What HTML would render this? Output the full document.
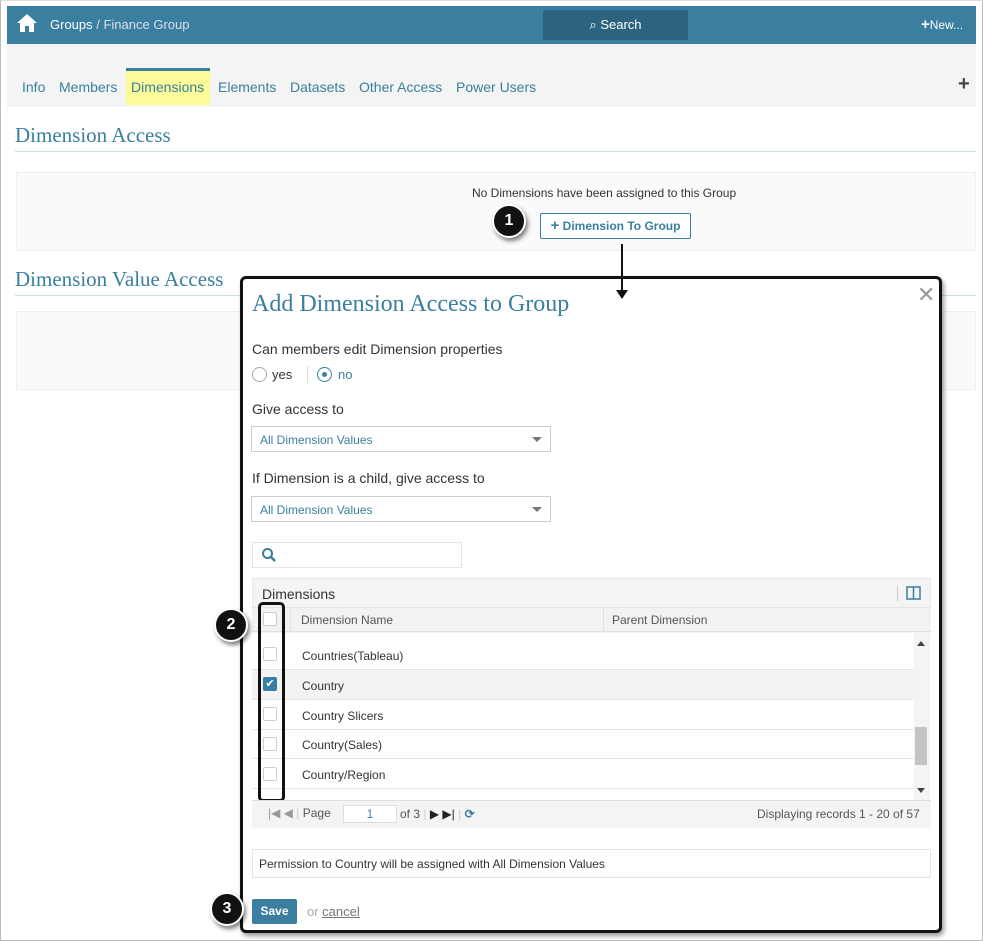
<!DOCTYPE html>
<html><head><style>
*{margin:0;padding:0;box-sizing:border-box}
body{width:983px;height:941px;background:#fff;font-family:"Liberation Sans",sans-serif;position:relative;overflow:hidden;font-size:13px;color:#333}
.a{position:absolute}
.serif{font-family:"Liberation Serif",serif;color:#3a7f9f}
.tab{position:absolute;top:79px;font-size:14px;color:#3a7f9f}
.cb{position:absolute;left:263px;width:14px;height:14px;border:1px solid #ccc;background:#fff;border-radius:2px}
.row{position:absolute;left:252px;width:662px;height:30px;border-bottom:1px solid #e4e4e4;font-size:12px;color:#333}
.row span{position:absolute;left:50px;top:9px}
.badge{position:absolute;width:34px;height:34px;border-radius:50%;background:#111;color:#fff;font-weight:bold;font-size:16px;text-align:center;line-height:30px;box-shadow:2px 3px 4px rgba(0,0,0,.5);border:2px solid #fff}
.sel{position:absolute;left:251px;width:300px;height:26px;border:1px solid #ccc;background:#fff;font-size:12px;color:#3a7f9f;padding:6px 8px}
.sel:after{content:"";position:absolute;right:8px;top:10px;border:5px solid transparent;border-top-color:#777}
</style></head><body>
<div class="a" style="left:0;top:0;width:983px;height:941px;border:1px solid #bbb;border-top-color:#ddd"></div>
<div class="a" style="left:7px;top:6px;width:969px;height:38px;background:#3a7f9f"></div>
<svg class="a" style="left:16px;top:13px" width="22" height="20" viewBox="0 0 22 20"><path d="M11 1 L1 10 H4 V19 H9 V13 H13 V19 H18 V10 H21 Z" fill="#fff"/></svg>
<div class="a" style="left:50px;top:17px;color:#fff;font-size:13px">Groups <span style="color:#dde">/ Finance Group</span></div>
<div class="a" style="left:543px;top:10px;width:145px;height:30px;background:#2c6480;border-radius:2px;color:#fff;font-size:13px;text-align:center;line-height:30px">&#x2315; Search</div>
<div class="a" style="left:921px;top:16px;color:#fff;font-size:12px"><b style="font-size:15px">+</b>New...</div>
<div class="a" style="left:7px;top:44px;width:969px;height:63px;background:#f4f4f4"></div>
<div class="a" style="left:126px;top:68px;width:84px;height:37px;background:#fbfb99;border-top:3px solid #3a7f9f"></div>
<div class="tab" style="left:22px">Info</div>
<div class="tab" style="left:59px">Members</div>
<div class="tab" style="left:131px;color:#3a7f9f">Dimensions</div>
<div class="tab" style="left:218px">Elements</div>
<div class="tab" style="left:290px">Datasets</div>
<div class="tab" style="left:359px">Other Access</div>
<div class="tab" style="left:456px">Power Users</div>
<div class="a" style="left:958px;top:73px;font-size:20px;font-weight:bold;color:#444">+</div>
<div class="a serif" style="left:15px;top:123px;font-size:21px">Dimension Access</div>
<div class="a" style="left:15px;top:151px;width:961px;height:1px;background:#cdd"></div>
<div class="a" style="left:16px;top:172px;width:960px;height:79px;background:#fafafa;border:1px solid #eee"></div>
<div class="a" style="left:472px;top:186px;font-size:12px;color:#333">No Dimensions have been assigned to this Group</div>
<div class="a" style="left:540px;top:213px;width:151px;height:26px;border:1px solid #3a7f9f;background:#fff;border-radius:2px;color:#3a7f9f;font-size:12px;font-weight:bold;line-height:24px;text-align:center"><span style="font-size:15px">+</span> Dimension To Group</div>
<div class="badge" style="left:492px;top:204px">1</div>
<div class="a serif" style="left:15px;top:267px;font-size:21px">Dimension Value Access</div>
<div class="a" style="left:15px;top:295px;width:961px;height:1px;background:#cdd"></div>
<div class="a" style="left:16px;top:311px;width:960px;height:79px;background:#fafafa;border:1px solid #eee"></div>
<div class="a" style="left:240px;top:276px;width:702px;height:657px;background:#fff;border:3px solid #111;border-radius:6px;box-shadow:2px 3px 5px rgba(0,0,0,.4)"></div>
<div class="a" style="left:621px;top:244px;width:2px;height:48px;background:#111"></div>
<div class="a" style="left:616px;top:290px;border:6px solid transparent;border-top:9px solid #111"></div>
<div class="a serif" style="left:252px;top:291px;font-size:24px">Add Dimension Access to Group</div>
<div class="a" style="left:917px;top:282px;font-size:22px;color:#999">✕</div>
<div class="a" style="left:252px;top:341px;font-size:14px">Can members edit Dimension properties</div>
<div class="a" style="left:252px;top:367px;width:15px;height:15px;border:1px solid #aaa;border-radius:50%"></div>
<div class="a" style="left:272px;top:367px;font-size:13px">yes</div>
<div class="a" style="left:307px;top:366px;width:1px;height:17px;background:#ddd"></div>
<div class="a" style="left:317px;top:367px;width:15px;height:15px;border:1px solid #3a7f9f;border-radius:50%"><div style="margin:4px;width:5px;height:5px;border-radius:50%;background:#3a7f9f"></div></div>
<div class="a" style="left:338px;top:367px;font-size:13px;color:#3a7f9f">no</div>
<div class="a" style="left:252px;top:401px;font-size:14px">Give access to</div>
<div class="sel" style="top:426px">All Dimension Values</div>
<div class="a" style="left:252px;top:470px;font-size:14px">If Dimension is a child, give access to</div>
<div class="sel" style="top:496px">All Dimension Values</div>
<div class="a" style="left:252px;top:542px;width:210px;height:26px;border:1px solid #e4e4e4"></div>
<svg class="a" style="left:261px;top:547px" width="16" height="16"><circle cx="6.5" cy="6.5" r="4.5" stroke="#3a7f9f" stroke-width="2" fill="none"/><path d="M10 10 L14 14" stroke="#3a7f9f" stroke-width="2.5"/></svg>
<div class="a" style="left:252px;top:578px;width:679px;height:250px;background:#f4f4f4;border:1px solid #e8e8e8"></div>
<div class="a" style="left:262px;top:586px;font-size:14px">Dimensions</div>
<div class="a" style="left:897px;top:585px;width:1px;height:16px;background:#ccc"></div>
<svg class="a" style="left:906px;top:586px" width="15" height="14"><rect x="1" y="1" width="13" height="12" fill="none" stroke="#3a7f9f" stroke-width="1.5"/><path d="M7.5 1V13" stroke="#3a7f9f" stroke-width="1.5"/></svg>
<div class="a" style="left:252px;top:607px;width:679px;height:25px;background:#f2f2f2;border-top:1px solid #e4e4e4;border-bottom:1px solid #e0e0e0"></div>
<div class="a" style="left:290px;top:608px;width:1px;height:24px;background:#e0e0e0"></div>
<div class="a" style="left:603px;top:608px;width:1px;height:24px;background:#e0e0e0"></div>
<div class="a" style="left:301px;top:613px;font-size:12px;color:#555">Dimension Name</div>
<div class="a" style="left:612px;top:613px;font-size:12px;color:#555">Parent Dimension</div>
<div class="a" style="left:252px;top:633px;width:679px;height:167px;background:#fff;overflow:hidden"></div>
<div class="row" style="top:640px"><span>Countries(Tableau)</span></div>
<div class="row" style="top:670px;background:#f3f3f3"><span>Country</span></div>
<div class="row" style="top:700px"><span>Country Slicers</span></div>
<div class="row" style="top:729px"><span>Country(Sales)</span></div>
<div class="row" style="top:759px"><span>Country/Region</span></div>
<div class="a" style="left:914px;top:633px;width:16px;height:167px;background:#f4f4f4"></div>
<div class="a" style="left:915px;top:727px;width:12px;height:38px;background:#c4c4c4"></div>
<div class="a" style="left:917px;top:637px;border:4px solid transparent;border-bottom:5px solid #444"></div>
<div class="a" style="left:917px;top:788px;border:4px solid transparent;border-top:5px solid #444"></div>
<div class="cb" style="top:612px"></div>
<div class="cb" style="top:647px"></div>
<div class="cb" style="top:677px;background:#3a7f9f;border-color:#3a7f9f;color:#fff;font-size:11px;line-height:12px;text-align:center">✔</div>
<div class="cb" style="top:707px"></div>
<div class="cb" style="top:737px"></div>
<div class="cb" style="top:767px"></div>
<div class="a" style="left:258px;top:602px;width:27px;height:200px;border:3px solid #111;border-radius:5px"></div>
<div class="badge" style="left:214px;top:608px">2</div>
<div class="a" style="left:252px;top:800px;width:679px;height:28px;background:#f4f4f4;border-top:1px solid #e0e0e0"></div>
<div class="a" style="left:268px;top:806px;font-size:12px;color:#999">|◀ ◀ <span style="color:#ccc">|</span> <span style="color:#555">Page</span></div>
<div class="a" style="left:343px;top:805px;width:54px;height:18px;border:1px solid #ddd;background:#fff;font-size:12px;color:#3a7f9f;text-align:center;line-height:16px">1</div>
<div class="a" style="left:400px;top:807px;font-size:12px;color:#555">of 3 <span style="color:#ccc">|</span> <span style="color:#222">▶ ▶|</span> <span style="color:#ccc">|</span> <span style="color:#3a7f9f;font-weight:bold">⟳</span></div>
<div class="a" style="left:757px;top:807px;font-size:12px;color:#555">Displaying records 1 - 20 of 57</div>
<div class="a" style="left:252px;top:849px;width:679px;height:29px;border:1px solid #e4e4e4;font-size:12px;padding:7px 6px">Permission to Country will be assigned with All Dimension Values</div>
<div class="a" style="left:252px;top:899px;width:45px;height:25px;background:#3a7f9f;border-radius:2px;color:#fff;font-weight:bold;font-size:12px;text-align:center;line-height:25px">Save</div>
<div class="a" style="left:307px;top:904px;font-size:13px;color:#aaa">or <span style="color:#777;text-decoration:underline">cancel</span></div>
<div class="badge" style="left:210px;top:892px">3</div>
</body></html>
